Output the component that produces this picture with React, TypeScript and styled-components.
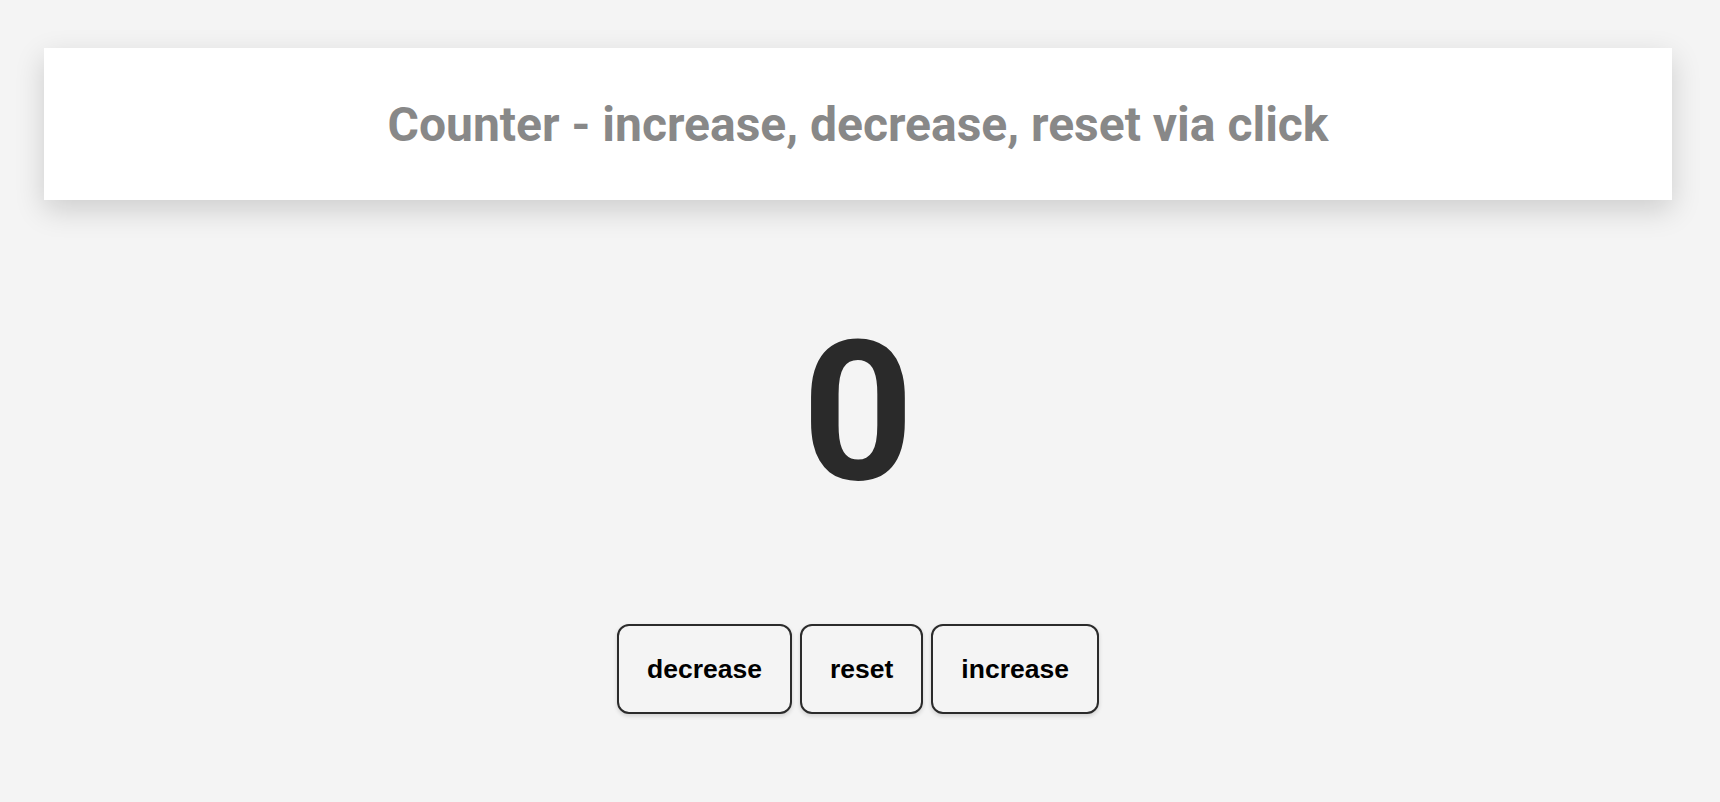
import React, { useState } from "react";
import styled, { createGlobalStyle } from "styled-components";

const GlobalStyle = createGlobalStyle`
  html, body {
    margin: 0;
    padding: 0;
    background: #f4f4f4;
  }
  body {
    font-family: Roboto, "Liberation Sans", Arial, sans-serif;
  }
`;

const Page = styled.main`
  display: flex;
  flex-direction: column;
  align-items: center;
  gap: 112px;
  padding: 48px 48px 0 44px;
  min-height: 100vh;
  box-sizing: border-box;
`;

const Header = styled.header`
  align-self: stretch;
  height: 152px;
  display: flex;
  align-items: center;
  justify-content: center;
  background: #ffffff;
  box-shadow: 0 10px 28px rgba(0, 0, 0, 0.16);
`;

const Title = styled.h1`
  margin: 0;
  font-family: Roboto, "Liberation Sans", Arial, sans-serif;
  font-weight: 700;
  font-size: 48px;
  color: #888888;
  letter-spacing: 0;
`;

const Count = styled.div`
  font-family: Roboto, "Liberation Sans", Arial, sans-serif;
  font-weight: 700;
  font-size: 195px;
  line-height: 202px;
  height: 200px;
  color: #2a2a2a;
`;

const ButtonRow = styled.div`
  display: flex;
  gap: 8px;
`;

const Button = styled.button`
  font-family: "Liberation Sans", Arial, sans-serif;
  font-weight: 700;
  font-size: 26.5px;
  line-height: normal;
  color: #000;
  background: #f4f4f4;
  border: 2px solid #2b2b2b;
  border-radius: 12px;
  padding: 27.5px 28px;
  box-shadow: 0 2px 4px rgba(0, 0, 0, 0.15);
  cursor: pointer;
`;

export default function App() {
  const [count, setCount] = useState(0);
  return (
    <>
      <GlobalStyle />
      <Page>
        <Header>
          <Title>Counter - increase, decrease, reset via click</Title>
        </Header>
        <Count>{count}</Count>
        <ButtonRow>
          <Button onClick={() => setCount((c) => c - 1)}>decrease</Button>
          <Button onClick={() => setCount(0)}>reset</Button>
          <Button onClick={() => setCount((c) => c + 1)}>increase</Button>
        </ButtonRow>
      </Page>
    </>
  );
}
